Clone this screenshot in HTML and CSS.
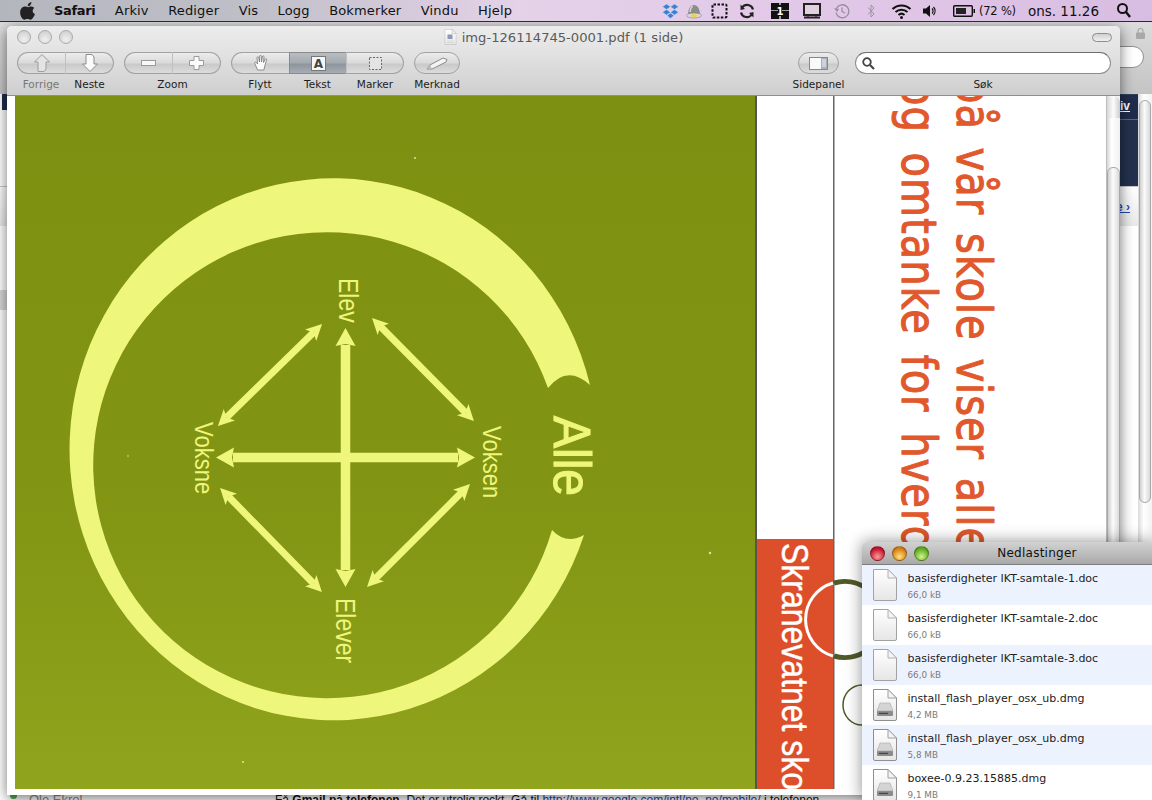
FILE: index.html
```html
<!DOCTYPE html>
<html lang="no">
<head>
<meta charset="utf-8">
<title>Preview</title>
<link rel="stylesheet" href="styles.css">
</head>
<body>
<svg class="defs" width="0" height="0" aria-hidden="true">
  <defs>
    <linearGradient id="docfill" x1="0" y1="0" x2="0" y2="1"><stop offset="0" stop-color="#fff"/><stop offset="1" stop-color="#e6e6e6"/></linearGradient>
    <symbol id="doc" viewBox="0 0 24 32">
      <path d="M.5.5H15L23.5 9V30a1.5 1.5 0 0 1-1.5 1.5H2A1.5 1.5 0 0 1 .5 30Z" fill="url(#docfill)" stroke="#a2a2a2"/>
      <path d="M15 .5V9H23.5Z" fill="#f4f4f4" stroke="#b0b0b0"/>
    </symbol>
    <symbol id="dmg" viewBox="0 0 24 32">
      <path d="M.5.5H15L23.5 9V30a1.5 1.5 0 0 1-1.5 1.5H2A1.5 1.5 0 0 1 .5 30Z" fill="url(#docfill)" stroke="#8f8f8f"/>
      <path d="M15 .5V9H23.5Z" fill="#f4f4f4" stroke="#a0a0a0"/>
      <path d="M7 14H17L20 22H4Z" fill="#d4d4d4" stroke="#a8a8a8" stroke-width=".6"/>
      <rect x="4" y="22" width="16" height="5" rx="1" fill="#8b8b8b"/>
      <rect x="6" y="23.8" width="9" height="1.2" fill="#444"/>
    </symbol>
    <marker id="head" markerUnits="userSpaceOnUse" markerWidth="20" markerHeight="22" viewBox="0 -11 20 22" refX="1" refY="0" orient="auto-start-reverse"><path d="M0-10 18 0 0 10 2 0Z" fill="#eff67c"/></marker>
    <marker id="headd" markerUnits="userSpaceOnUse" markerWidth="18" markerHeight="18" viewBox="0 -9 18 18" refX="4" refY="0" orient="auto-start-reverse"><path d="M0-8 16 0 0 8 4 0Z" fill="#eff67c"/></marker>
  </defs>
</svg>

<div class="browser">
  <div class="b-head">
    <svg class="b-lock" width="9" height="11" viewBox="0 0 9 11"><rect x="0" y="4.5" width="9" height="6.5" rx="1" fill="#a9a9a9"/><path d="M2 5V3a2.5 2.5 0 0 1 5 0V5" fill="none" stroke="#a9a9a9" stroke-width="1.2"/></svg>
    <div class="b-search"></div>
  </div>
  <div class="b-body">
    <i class="b-sliver"></i>
    <i class="b-band"></i>
    <div class="b-main">
      <div class="b-banner"><span class="b-banner-link">iv</span></div>
      <div class="b-sub"><span class="b-sub-link">e ›</span></div>
      <div class="b-content"></div>
      <div class="b-foot">
        <i class="b-dot"></i>
        <span class="b-name">Ole Ekrol</span>
        <p class="b-para">Få <b>Gmail på telefonen.</b> Det er utrolig rockt. Gå til <a class="b-url">http://www.google.com/intl/no_no/mobile/</a> i telefonen</p>
      </div>
    </div>
    <div class="b-scroll"><div class="b-thumb"></div></div>
  </div>
</div>

<header class="menubar">
  <svg class="apple" width="16" height="18" viewBox="0 0 16 18"><path d="M11.4 0c.1 1.3-.4 2.3-1 3-.7.8-1.700 1.300-2.600 1.200C7.600 3 8.200 1.900 8.800 1.300 9.500.6 10.600.1 11.400 0ZM14.300 6.100c-.9.600-1.600 1.500-1.600 2.800 0 1.500.9 2.500 2.300 3.100-.4 1.200-1 2.400-1.800 3.500-.8 1.100-1.500 2.200-2.800 2.200-1.200 0-1.600-.7-3-.7s-1.900.7-3 .7c-1.200 0-2.100-1.200-2.900-2.300C-.1 13 -.6 8.500 1.700 6.100c1-1 2.200-1.500 3.300-1.500 1.200 0 2 .7 3 .7.900 0 1.600-.7 3.100-.7 1.100 0 2.300.5 3.200 1.500Z" fill="#222"/></svg>
  <nav class="menu">
    <span class="menu-app">Safari</span><span>Arkiv</span><span>Rediger</span><span>Vis</span><span>Logg</span><span>Bokmerker</span><span>Vindu</span><span>Hjelp</span>
  </nav>
  <div class="status">
    <svg class="st" width="17" height="16" viewBox="0 0 17 16"><path d="M4.500 1 8.500 3.700 4.500 6.500.5 3.700ZM12.500 1 16.500 3.700 12.500 6.500 8.500 3.700ZM4.500 6.500 8.500 9.200 4.500 12 .5 9.200ZM12.500 6.500 16.500 9.200 12.500 12 8.500 9.200ZM8.500 10 12 12.500 8.500 15.500 5 12.500Z" fill="#3f7fd0" stroke="#dbe8f8" stroke-width=".4"/></svg>
    <svg class="st" width="16" height="16" viewBox="0 0 16 16"><path d="M2 12C2 6 4.500 2 8 2s6 4 6 10Z" fill="#8c8c8c"/><path d="M4 9c0-3 1.500-5 2.500-6" stroke="#ddd" stroke-width="1.500" fill="none"/><ellipse cx="8" cy="12.500" rx="7.500" ry="2.500" fill="#d8d8d8" stroke="#777" stroke-width=".5"/><ellipse cx="8" cy="12.500" rx="3" ry="1.500" fill="#f4cf45"/></svg>
    <svg class="st" width="17" height="16" viewBox="0 0 17 16"><rect x="1.500" y="1.500" width="14" height="13" rx="1" fill="none" stroke="#111" stroke-width="2" stroke-dasharray="2.500 1.500"/></svg>
    <svg class="st" width="16" height="16" viewBox="0 0 16 16"><path d="M14 6.500A6 6 0 0 0 3.200 4.500M2 9.500A6 6 0 0 0 12.800 11.500" fill="none" stroke="#222" stroke-width="2.200"/><path d="M1.500 1.500 6 6 1.500 7ZM14.500 14.500 10 10 14.500 9Z" fill="#222"/></svg>
    <svg class="st" width="18" height="16" viewBox="0 0 18 16"><rect width="18" height="16" fill="#111"/><path d="M8.500 0V16M9.500 0V16M0 7.500H18" stroke="#c9bfd0" stroke-width=".8"/><rect x="7" y="2" width="4" height="11" fill="#111"/><text x="9" y="12" class="st-num">1</text></svg>
    <svg class="st" width="18" height="16" viewBox="0 0 18 16"><rect x="1" y="1" width="16" height="11" fill="#e0d0e0" stroke="#222" stroke-width="2"/><path d="M1 14.500H17" stroke="#222" stroke-width="2"/><path d="M5 12V15M13 12V15" stroke="#222"/></svg>
    <svg class="st" width="16" height="16" viewBox="0 0 16 16"><path d="M2.500 5.500A6.500 6.500 0 1 1 2 9.500" fill="none" stroke="#948c9a" stroke-width="1.300"/><path d="M0 5 5 6 3 9Z" fill="#948c9a"/><path d="M8 4.500V8.500L11 10" fill="none" stroke="#948c9a" stroke-width="1.200"/></svg>
    <svg class="st" width="8" height="16" viewBox="0 0 8 16"><path d="M1 4.500 7 11 4 14V2L7 5 1 11.500" fill="none" stroke="#9c94a2"/></svg>
    <svg class="st" width="21" height="16" viewBox="0 0 21 16"><path d="M1.500 6a13 13 0 0 1 18 0M4.500 9a9 9 0 0 1 12 0M7.500 12a4.500 4.500 0 0 1 6 0" fill="none" stroke="#111" stroke-width="2"/><circle cx="10.500" cy="14.500" r="1.500" fill="#111"/></svg>
    <svg class="st" width="13" height="14" viewBox="0 0 13 14"><path d="M0 4.500H3L7 1V13L3 9.500H0Z" fill="#111"/><path d="M9 4.500a3.500 3.500 0 0 1 0 5M10.500 3a6 6 0 0 1 0 8" fill="none" stroke="#111" stroke-width="1.200"/></svg>
    <svg class="st" width="22" height="12" viewBox="0 0 22 12"><rect x=".7" y=".7" width="18.600" height="10.600" rx="1" fill="none" stroke="#111" stroke-width="1.400"/><rect x="3" y="3" width="10" height="6" fill="#222"/><rect x="20.500" y="4" width="1.500" height="4" fill="#111"/></svg>
    <span class="st-pct">(72 %)</span>
    <span class="st-clock">ons. 11.26</span>
    <svg class="st-mag" width="14" height="15" viewBox="0 0 14 15"><circle cx="5.500" cy="5.500" r="4.500" fill="none" stroke="#111" stroke-width="2"/><path d="M9 9 13 14" stroke="#111" stroke-width="2.400"/></svg>
  </div>
</header>

<section class="preview">
  <div class="pv-title">
    <div class="lights"><i class="light-off"></i><i class="light-off"></i><i class="light-off"></i></div>
    <svg class="pv-icon" width="13" height="16" viewBox="0 0 24 32"><use href="#doc"/><rect x="6" y="11" width="10" height="9" fill="#8e9ab4"/><path d="M5 24H19M5 27H19" stroke="#c8c8c8"/></svg>
    <span class="pv-name">img-126114745-0001.pdf (1 side)</span>
    <i class="pv-pill"></i>
  </div>
  <div class="toolbar">
    <div class="tool-group">
      <div class="tool w48 first"><div class="btn">
        <svg width="16" height="18" viewBox="0 0 16 18"><path d="M8 .5 15.500 8H12V15L10 17.500H4V8H.5Z" fill="#e4e4e4" stroke="#9c9c9c"/></svg>
      </div><span class="tool-label dim">Forrige</span></div>
      <div class="tool w49 last"><div class="btn">
        <svg width="16" height="18" viewBox="0 0 16 18"><path d="M8 17.500 15.500 10H12V3L10 .5H4V10H.5Z" fill="#fafafa" stroke="#8c8c8c"/></svg>
      </div><span class="tool-label">Neste</span></div>
    </div>
    <div class="tool-group">
      <div class="tool w48 first"><div class="btn">
        <svg width="15" height="6" viewBox="0 0 15 6"><rect x=".5" y=".5" width="14" height="5" fill="#f8f8f8" stroke="#9a9a9a"/></svg>
      </div><span class="tool-label zoom-label">Zoom</span></div>
      <div class="tool w49 last"><div class="btn">
        <svg width="15" height="14" viewBox="0 0 15 14"><path d="M5 .5H10V4.500H14.500V9.500H10V13.500H5V9.500H.5V4.500H5Z" fill="#fafafa" stroke="#9a9a9a"/></svg>
      </div></div>
    </div>
    <div class="tool-group">
      <div class="tool w58 first"><div class="btn">
        <svg width="14" height="16" viewBox="0 0 14 16"><path d="M3.500 15 .8 8.500c-.6-1.200 1-2 1.700-.8L3.500 9 3 2.500c0-1 1.500-1 1.600 0L5.500 7 5.700 1c0-1 1.600-1 1.600 0L7.500 7l1-5.500c.2-1 1.600-.8 1.500.2L9.500 7.500 11.200 4c.4-.9 1.800-.4 1.400.6L10.500 12l-.5 3Z" fill="#fafafa" stroke="#777" stroke-width=".8"/></svg>
      </div><span class="tool-label">Flytt</span></div>
      <div class="tool w57 on"><div class="btn">
        <svg width="15" height="15" viewBox="0 0 15 15"><rect x=".5" y=".5" width="14" height="14" fill="#f6f6f6" stroke="#777"/><text x="7.500" y="12" class="a-glyph">A</text></svg>
      </div><span class="tool-label">Tekst</span></div>
      <div class="tool w58 last"><div class="btn">
        <svg width="15" height="15" viewBox="0 0 15 15"><rect x="1.500" y="1.500" width="12" height="12" fill="#e4e4e4" stroke="#666" stroke-dasharray="2 1.500"/></svg>
      </div><span class="tool-label">Marker</span></div>
    </div>
    <div class="tool-group">
      <div class="tool w46 first last"><div class="btn">
        <svg width="22" height="13" viewBox="0 0 22 13"><path d="M1 12 4 8 17 1l4 1.500-1 2.500L6 12Z" fill="#f4f4f4" stroke="#8a8a8a"/><path d="M1 12 4 8 6 12Z" fill="#bbb"/></svg>
      </div><span class="tool-label">Merknad</span></div>
    </div>
    <div class="tool-group side">
      <div class="tool w51"><div class="btn side-btn">
        <svg width="19" height="13" viewBox="0 0 19 13"><rect x=".5" y=".5" width="18" height="12" fill="#fafafa" stroke="#888"/><rect x="12" y="1" width="6" height="11" fill="#aab0ba"/><path d="M13 3H17M13 5H17M13 7H17M13 9H17" stroke="#f4f4f4"/></svg>
      </div><span class="tool-label">Sidepanel</span></div>
    </div>
    <div class="search-tool">
      <div class="search-box">
        <svg width="13" height="13" viewBox="0 0 13 13"><circle cx="5" cy="5" r="3.800" fill="none" stroke="#444" stroke-width="1.800"/><path d="M8 8 12 12" stroke="#444" stroke-width="2.200"/></svg>
      </div>
      <span class="tool-label">Søk</span>
    </div>
  </div>
  <div class="viewer">
    <svg class="sheet" width="1099" height="699" viewBox="7 96 1099 699">
      <defs><linearGradient id="olive" x1="0" y1="0" x2="0" y2="1"><stop offset="0" stop-color="#7e9011"/><stop offset=".55" stop-color="#819413"/><stop offset="1" stop-color="#90a41d"/></linearGradient></defs>
      <rect x="7" y="96" width="1099" height="699" fill="#fff"/>
      <rect x="15" y="96" width="740" height="693" fill="url(#olive)"/>
      <g class="specks"><circle cx="415" cy="158" r="1"/><circle cx="710" cy="553" r="1.200"/><circle cx="243" cy="762" r="1"/><circle cx="128" cy="456" r=".8"/></g>
      <rect x="755" y="96" width="2" height="693" fill="#555"/>
      <rect x="833" y="96" width="1.500" height="693" fill="#666"/>
      <rect x="757" y="539" width="76" height="250" fill="#dd4f2a"/>
      <path class="ring" d="M590 385A264 271 0 1 0 584 535Q566 545 552 530A234 233 0 1 1 548 388Q567 364 590 385Z"/>
      <g class="shaft">
        <line x1="345.500" y1="345" x2="345.500" y2="570" marker-start="url(#head)" marker-end="url(#head)"/>
        <line x1="233" y1="457.500" x2="458" y2="457.500" marker-start="url(#head)" marker-end="url(#head)"/>
      </g>
      <g class="shaft-d">
        <line x1="313.500" y1="332.400" x2="226.500" y2="417.600" marker-start="url(#headd)" marker-end="url(#headd)"/>
        <line x1="380.500" y1="326.500" x2="465.500" y2="412.500" marker-start="url(#headd)" marker-end="url(#headd)"/>
        <line x1="228.500" y1="496.500" x2="313.500" y2="583.500" marker-start="url(#headd)" marker-end="url(#headd)"/>
        <line x1="461.500" y1="492.500" x2="375.500" y2="578.500" marker-start="url(#headd)" marker-end="url(#headd)"/>
      </g>
      <text class="lbl" transform="translate(339 278) rotate(90) scale(1 1.200)">Elev</text>
      <text class="lbl s22" transform="translate(195 422) rotate(90) scale(1 1.200)">Voksne</text>
      <text class="lbl s22" transform="translate(483 426) rotate(90) scale(1 1.200)">Voksen</text>
      <text class="lbl" transform="translate(336 598) rotate(90) scale(1 1.200)">Elever</text>
      <text class="lbl s48" transform="translate(554 416) rotate(90) scale(1 1.070)">Alle</text>
      <path class="circ-w" d="M833 583A38 38 0 0 0 833 656"/>
      <path class="circ-o" d="M834 583A38 38 0 1 1 834 656"/>
      <path class="circ-t" d="M862 685A19 20 0 0 0 862 725"/>
      <text class="skr" transform="translate(782 543) rotate(90) scale(1 1.150)">Skranevatnet skole</text>
      <text class="comic line-a" transform="translate(957 78) rotate(90) scale(1 1.200)">på vår skole viser alle</text>
      <text class="comic line-b" transform="translate(902 81) rotate(90) scale(1 1.200)">og omtanke for hverdagen</text>
      <rect x="7" y="789" width="1099" height="6" fill="#fff"/>
    </svg>
    <div class="pv-scroll"><div class="pv-cap"></div><div class="pv-thumb"></div></div>
  </div>
</section>

<section class="downloads">
  <div class="dl-title">
    <div class="lights dl-lights"><i class="red"></i><i class="amber"></i><i class="green"></i></div>
    <span class="dl-name">Nedlastinger</span>
  </div>
  <ul class="dl-list">
    <li class="dl-row alt"><svg class="dl-icon" width="24" height="32"><use href="#doc"/></svg><div><p class="dl-file">basisferdigheter IKT-samtale-1.doc</p><p class="dl-size">66,0 kB</p></div></li>
    <li class="dl-row"><svg class="dl-icon" width="24" height="32"><use href="#doc"/></svg><div><p class="dl-file">basisferdigheter IKT-samtale-2.doc</p><p class="dl-size">66,0 kB</p></div></li>
    <li class="dl-row alt"><svg class="dl-icon" width="24" height="32"><use href="#doc"/></svg><div><p class="dl-file">basisferdigheter IKT-samtale-3.doc</p><p class="dl-size">66,0 kB</p></div></li>
    <li class="dl-row"><svg class="dl-icon" width="24" height="32"><use href="#dmg"/></svg><div><p class="dl-file">install_flash_player_osx_ub.dmg</p><p class="dl-size">4,2 MB</p></div></li>
    <li class="dl-row alt"><svg class="dl-icon" width="24" height="32"><use href="#dmg"/></svg><div><p class="dl-file">install_flash_player_osx_ub.dmg</p><p class="dl-size">5,8 MB</p></div></li>
    <li class="dl-row"><svg class="dl-icon" width="24" height="32"><use href="#dmg"/></svg><div><p class="dl-file">boxee-0.9.23.15885.dmg</p><p class="dl-size">9,1 MB</p></div></li>
  </ul>
</section>
</body>
</html>
```
FILE: styles.css
```css
* { box-sizing: border-box; }
html, body { margin: 0; padding: 0; }
body {
  position: relative;
  width: 1152px;
  height: 800px;
  overflow: hidden;
  background: #fff;
  font-family: "DejaVu Sans", sans-serif;
  color: #222;
}
.defs { position: absolute; }
p { margin: 0; }

/* menu bar */
.menubar {
  position: absolute;
  inset: 0 0 auto 0;
  height: 22px;
  display: flex;
  align-items: center;
  padding-left: 20px;
  background: linear-gradient(90deg, #b4b6be 0%, #bfbfc8 22%, #e4d2e8 45%, #e2c8e8 70%, #d8bde2 100%);
  border-bottom: 1px solid #2a2a30;
  z-index: 5;
  font-size: 13px;
  color: #111;
}
.apple { flex: none; margin-right: 18px; }
.menu { display: flex; gap: 19.500px; letter-spacing: .15px; }
.menu-app { font-weight: 700; letter-spacing: -.35px; }
.status { margin-left: auto; display: flex; align-items: center; padding-right: 21px; }
.status .st { flex: none; }
.status .st:nth-of-type(1) { margin-right: 6.500px; }
.status .st:nth-of-type(2) { margin-right: 9px; }
.status .st:nth-of-type(3) { margin-right: 11.500px; }
.status .st:nth-of-type(4) { margin-right: 15.500px; }
.status .st:nth-of-type(5) { margin-right: 14px; }
.status .st:nth-of-type(6) { margin-right: 13px; }
.status .st:nth-of-type(7) { margin-right: 17.500px; }
.status .st:nth-of-type(8) { margin-right: 15.500px; }
.status .st:nth-of-type(9) { margin-right: 11px; }
.status .st:nth-of-type(10) { margin-right: 17px; }
.status .st:nth-of-type(11) { margin-right: 4px; }
.st-num { font: 700 10px "DejaVu Sans", sans-serif; fill: #fff; text-anchor: middle; }
.st-pct { font-size: 11.500px; margin-right: 12px; white-space: nowrap; letter-spacing: -.2px; }
.st-clock { font-size: 13.500px; margin-right: 18px; white-space: nowrap; }
.st-mag { flex: none; }

/* background browser */
.browser {
  position: absolute;
  inset: 22px 0 0 0;
  display: flex;
  flex-direction: column;
  background: #fff;
}
.b-head {
  position: relative;
  height: 72px;
  flex: none;
  background: linear-gradient(#dcdcdc, #c4c4c4);
}
.b-lock { position: absolute; left: 1136px; top: 6px; }
.b-search {
  position: absolute;
  left: 1100px;
  top: 24px;
  width: 44px;
  height: 22px;
  border: 1px solid #8f8f8f;
  border-radius: 11px;
  background: #fff;
}
.b-body { flex: 1; display: flex; min-height: 0; position: relative; }
.b-sliver { position: absolute; left: 2px; top: 0; width: 5px; height: 16px; background: #1f2d4d; z-index: 1; }
.b-band { position: absolute; left: 0; top: 196px; width: 7px; height: 20px; background: #d8d8d8; z-index: 1; }
.b-main { flex: 1; display: flex; flex-direction: column; min-width: 0; }
.b-banner {
  height: 92px;
  flex: none;
  margin-left: 1000px;
  border-top: 1px solid #31405f;
  display: flex;
  justify-content: flex-end;
  padding: 4px 8px 0 0;
  background-image: linear-gradient(#1f2d4d 24px, #5a6780 24px, #5a6780 25px, #24324f 25px);
}
.b-banner-link { color: #fff; font: 700 12px "Liberation Sans", sans-serif; text-decoration: underline; }
.b-sub {
  height: 40px;
  flex: none;
  display: flex;
  justify-content: flex-end;
  align-items: center;
  padding-right: 8px;
  background: linear-gradient(#fff, #e9e9e9);
  border-top: 1px solid #c8c8d0;
}
.b-sub-link { color: #1f48b8; font: 700 12px "Liberation Sans", sans-serif; text-decoration: underline; }
.b-content { flex: 1; }
.b-foot {
  flex: none;
  height: 14px;
  position: relative;
  font: 12px/18px "Liberation Sans", sans-serif;
  color: #111;
  padding-left: 275px;
}
.b-para { white-space: nowrap; margin-top: 5px; }
.b-url { color: #1f48b8; text-decoration: underline; }
.b-name { position: absolute; left: 29px; top: 5px; color: #888; font-size: 13px; }
.b-dot { position: absolute; left: 10px; top: 6px; width: 7px; height: 7px; border-radius: 50%; background: #4aa84a; }
.b-scroll {
  width: 14px;
  flex: none;
  background: linear-gradient(90deg, #d9d9d9, #fff 40%, #f2f2f2);
  padding: 6px 1px 0;
}
.b-thumb {
  height: 403px;
  border: 1px solid #a8a8a8;
  border-radius: 6px;
  background: linear-gradient(90deg, #cfcfcf, #fbfbfb 45%, #d8d8d8);
}

/* preview window */
.preview {
  position: absolute;
  left: 7px;
  top: 26px;
  width: 1113px;
  height: 769px;
  display: flex;
  flex-direction: column;
  border-radius: 5px 5px 0 0;
  box-shadow: 0 3px 14px rgba(0, 0, 0, .55);
  background: #fff;
  z-index: 2;
  overflow: hidden;
}
.pv-title {
  height: 22px;
  flex: none;
  position: relative;
  display: flex;
  align-items: center;
  justify-content: center;
  background: linear-gradient(#ececec, #e4e4e4);
}
.lights { position: absolute; left: 10px; top: 4px; display: flex; gap: 7px; }
.lights i { width: 14px; height: 14px; border-radius: 50%; display: block; }
.light-off {
  background: radial-gradient(circle at 50% 70%, #f0f0f0, #c9c9c9);
  border: 1px solid #a9a9a9;
}
.pv-icon { margin-right: 5px; flex: none; }
.pv-name { font-size: 13.100px; color: #5a5a5a; white-space: nowrap; }
.pv-pill {
  position: absolute;
  right: 8px;
  top: 7px;
  width: 20px;
  height: 9px;
  border: 1px solid #8d8d8d;
  border-radius: 5px;
  background: linear-gradient(#d0d0d0, #f0f0f0);
}
.toolbar {
  height: 48px;
  flex: none;
  display: flex;
  gap: 10px;
  padding: 4px 9px 0 10px;
  background: linear-gradient(#e4e4e4, #cfcfcf);
  border-bottom: 1px solid #8e8e8e;
}
.tool-group { display: flex; flex: none; }
.tool { display: flex; flex-direction: column; align-items: center; flex: none; }
.w46 { width: 46px; }
.w48 { width: 48px; }
.w49 { width: 49px; }
.w51 { width: 51px; }
.w57 { width: 57px; }
.w58 { width: 58px; }
.btn {
  width: 100%;
  height: 22px;
  display: flex;
  align-items: center;
  justify-content: center;
  border: 1px solid #a2a2a2;
  border-left-color: #c0c0c0;
  border-right: none;
  background: linear-gradient(#ececec, #dadada 50%, #c9c9c9 55%, #dcdcdc);
}
.first .btn { border-left-color: #a2a2a2; border-radius: 11px 0 0 11px; }
.last .btn { border-right: 1px solid #a2a2a2; border-radius: 0 11px 11px 0; }
.first.last .btn, .side-btn { border-radius: 11px; border: 1px solid #a2a2a2; }
.side-btn { width: 41px; }
.on .btn { background: linear-gradient(#b8bdc4, #a4a9b0 50%, #8e949c 55%, #a8adb4); border-color: #8a8a8a; }
.tool-label { font-size: 10.500px; line-height: 14px; margin-top: 3px; color: #1c1c1c; white-space: nowrap; }
.dim { color: #777; }
.zoom-label { transform: translateX(24.500px); }
.a-glyph { font: 700 12px "DejaVu Sans", sans-serif; fill: #444; text-anchor: middle; }
.side { margin-left: auto; margin-right: -4px; width: 51px; }
.search-tool { width: 256px; flex: none; display: flex; flex-direction: column; align-items: center; margin-left: 5px; }
.search-box {
  width: 100%;
  height: 22px;
  display: flex;
  align-items: center;
  padding-left: 6px;
  background: #fff;
  border: 1px solid #8c8c8c;
  border-top-color: #6e6e6e;
  border-radius: 11px;
}
.viewer { flex: 1; display: flex; min-height: 0; }
.sheet { display: block; flex: none; }
.specks circle { fill: #dfe6a0; }
.lbl {
  font: 23px "Liberation Sans", sans-serif;
  fill: #eff67c;
}
.s22 { font-size: 22px; }
.s48 { font-size: 48px; stroke: #eff67c; stroke-width: 1; }
.ring { fill: #eff67c; }
.shaft line { stroke: #eff67c; stroke-width: 9.500; }
.shaft-d line { stroke: #eff67c; stroke-width: 7; }
.circ-w { fill: none; stroke: #fff; stroke-width: 3; }
.circ-o { fill: none; stroke: #4f5a28; stroke-width: 5; }
.circ-t { fill: none; stroke: #4f5a28; stroke-width: 1.500; }
.skr { font: 32px "Liberation Sans", sans-serif; fill: #fff; stroke: #fff; stroke-width: .4; }
.comic {
  font: 40px "DejaVu Sans", sans-serif;
  fill: #e0582b;
  stroke: #e0582b;
  stroke-width: .9;
  stroke-linejoin: round;
  letter-spacing: 1px;
}
.line-a { word-spacing: 4px; }
.line-b { word-spacing: 6px; }
.pv-scroll {
  flex: 1;
  position: relative;
  background: linear-gradient(90deg, #d6d6d6, #fff 35%, #f0f0f0);
  border-left: 1px solid #bdbdbd;
}
.pv-cap {
  height: 22px;
  border-radius: 7px 7px 0 0;
  background: linear-gradient(90deg, #d8d8d8, #fcfcfc 50%, #cccccc);
}
.pv-thumb {
  margin-top: 49px;
  height: 628px;
  border: 1px solid #a8a8a8;
  border-radius: 6px 6px 0 0;
  background: linear-gradient(90deg, #cfcfcf, #fcfcfc 45%, #dcdcdc);
}

/* downloads window */
.downloads {
  position: absolute;
  left: 862px;
  top: 542px;
  width: 290px;
  height: 258px;
  background: #fff;
  border-radius: 5px 0 0 0;
  box-shadow: 0 0 16px rgba(0, 0, 0, .45);
  z-index: 3;
  overflow: hidden;
}
.dl-title {
  height: 23px;
  position: relative;
  display: flex;
  align-items: center;
  justify-content: center;
  background: linear-gradient(#d2d2d2, #a9a9a9);
  border-bottom: 1px solid #7d7d7d;
  padding-left: 60px;
}
.dl-lights { left: 8px; top: 4px; }
.dl-lights i { width: 15px; height: 15px; border: 1px solid rgba(0, 0, 0, .3); }
.red { background: radial-gradient(circle at 50% 75%, #ff9a9a, #c0142c 70%); }
.amber { background: radial-gradient(circle at 50% 75%, #ffe37a, #d57a14 70%); }
.green { background: radial-gradient(circle at 50% 75%, #cff58c, #5da71f 70%); }
.dl-name { font-size: 12px; letter-spacing: .25px; color: #111; }
.dl-list { list-style: none; margin: 0; padding: 0; }
.dl-row {
  height: 40px;
  display: flex;
  align-items: center;
  gap: 10.500px;
  padding-left: 11px;
}
.dl-row div { padding-top: 2px; }
.alt { background: #edf3fe; }
.dl-icon { flex: none; }
.dl-file { font-size: 11px; line-height: 14px; color: #222; white-space: nowrap; }
.dl-size { font-size: 8.800px; line-height: 12px; margin-top: 3px; color: #7a7a7a; white-space: nowrap; }
```
